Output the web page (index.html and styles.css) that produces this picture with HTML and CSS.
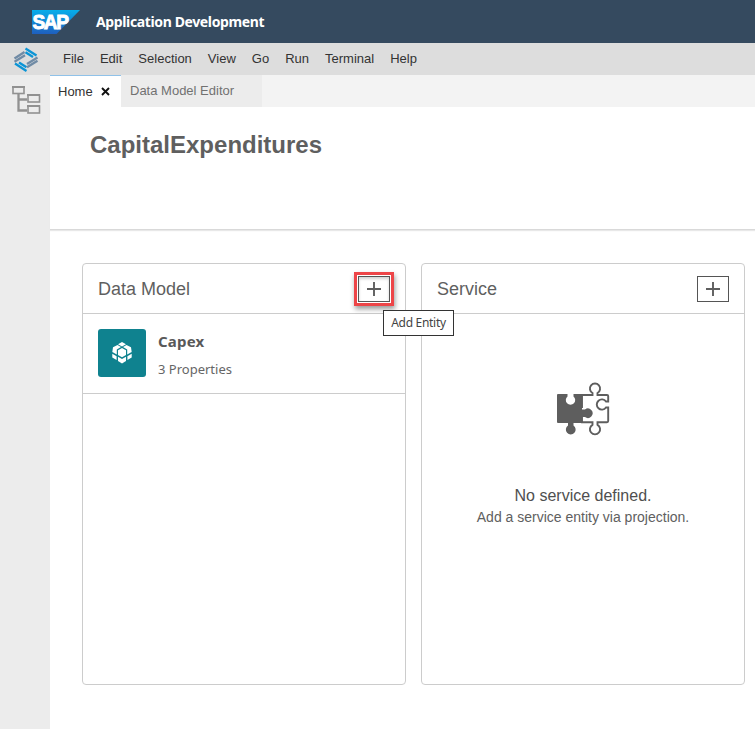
FILE: index.html
```html
<!DOCTYPE html>
<html lang="en">
<head>
<meta charset="utf-8">
<title>Application Development</title>
<link rel="stylesheet" href="styles.css">
</head>
<body>
<header class="shell">
  <svg class="sap" width="48" height="24" viewBox="0 0 48 24" role="img">
    <defs><linearGradient id="blue" x1="0" y1="0" x2="0" y2="1"><stop offset="0" stop-color="#06aeea"/><stop offset="1" stop-color="#1f5fbe"/></linearGradient></defs>
    <path d="M0 0H48L24.500 24H0Z" fill="url(#blue)"/>
    <text class="sap-text" x="0.500" y="18.700" textLength="35" lengthAdjust="spacingAndGlyphs">SAP</text>
  </svg>
  <span class="shell-title">Application Development</span>
</header>
<nav class="menu">
  <svg class="product" width="26" height="26" viewBox="0 0 26 26" fill="none" stroke-width="2.300">
    <g stroke="#0a94d6"><path d="M12.500 1.500L23.500 8.500"/><path d="M12.500 5.200L20 10"/><path d="M2 16.500L13.500 24"/><path d="M6 15.500L13.500 20.300"/></g>
    <g stroke="#708ba5"><path d="M11.500 5L1.500 11.500"/><path d="M12 8.300L1.500 14.800"/><path d="M14 17L24.500 10.500"/><path d="M14 20.300L24.500 13.800"/></g>
  </svg>
  <span>File</span><span>Edit</span><span>Selection</span><span>View</span><span>Go</span><span>Run</span><span>Terminal</span><span>Help</span>
</nav>
<div class="workspace">
  <aside class="sidebar">
    <svg width="30" height="30" viewBox="0 0 30 30" fill="none" stroke="#919191" stroke-width="1.600">
      <path d="M6.500 8V25.500H15M6.500 14.500H15" stroke-width="2.300"/>
      <rect x="1" y="2" width="11" height="6.500"/><rect x="16" y="10" width="11.500" height="7"/><rect x="16" y="21" width="11.500" height="7"/>
      <path d="M0 2H13M15 10H28M15 21H28" stroke-width="2"/>
    </svg>
  </aside>
  <main class="main">
    <div class="tabs">
      <div class="tab active">Home<svg width="9" height="9" viewBox="0 0 9 9"><path d="M1 1L8 8M8 1L1 8" stroke="#111" stroke-width="1.900"/></svg></div>
      <div class="tab">Data Model Editor</div>
    </div>
    <div class="project"><h1>CapitalExpenditures</h1></div>
    <div class="cards">
      <section class="card">
        <div class="card-head">
          <h2>Data Model</h2>
          <div class="add highlighted">
            <svg width="14" height="14" viewBox="0 0 14 14"><path d="M7 0V14M0 7H14" stroke="#5e5e5e" stroke-width="1.900"/></svg>
            <div class="tooltip">Add Entity</div>
          </div>
        </div>
        <div class="entity">
          <div class="entity-icon">
            <svg width="22" height="24" viewBox="0 0 22 24" fill="#fff">
              <path d="M11 1L15 3.300L11 5.600L7 3.300ZM2 6.300L6.500 4L10 6L5.800 8.500V13.500L1.300 11ZM20 6.300L15.500 4L12 6L16.200 8.500V13.500L20.700 11ZM1.300 12.800L5.600 15.200V19L1.300 16.500ZM20.700 12.800L16.400 15.200V19L20.700 16.500ZM7 15.800L11 18L15 15.800V20L11 22.500L7 20Z"/>
              <path d="M11 7L15 9.300V14L11 16.300L7 14V9.300Z"/>
            </svg>
          </div>
          <div><div class="entity-name">Capex</div><div class="entity-info">3 Properties</div></div>
        </div>
      </section>
      <section class="card">
        <div class="card-head">
          <h2>Service</h2>
          <div class="add"><svg width="14" height="14" viewBox="0 0 14 14"><path d="M7 0V14M0 7H14" stroke="#5e5e5e" stroke-width="1.900"/></svg></div>
        </div>
        <div class="empty">
          <svg width="56" height="56" viewBox="0 0 56 56">
            <path fill="#5e5e5e" d="M3 13H12.500V15.500A4.700 4.700 0 1 0 18.500 15.500V13H27V28.500H30A4.700 4.700 0 1 1 30 36H27V42H18.500V44.500A4.900 4.900 0 1 1 13 44.500V42H3Q2 42 2 41V14Q2 13 3 13Z"/>
            <path fill="none" stroke="#5e5e5e" stroke-width="1.900" d="M27 27V14H37.500V12A5.100 5.100 0 1 1 42.500 12V14H52Q53.200 14 53.200 15.200V20.500H51A5.100 5.100 0 1 0 51 26.500H53.200V40Q53.200 41.200 52 41.200H42.500V43.800A5.100 5.100 0 1 1 37.500 43.800V41.200H27V36"/>
          </svg>
          <div class="empty-title">No service defined.</div>
          <div class="empty-text">Add a service entity via projection.</div>
        </div>
      </section>
    </div>
  </main>
</div>
</body>
</html>
```

FILE: styles.css
```css
* { box-sizing: border-box; }
body { margin: 0; height: 729px; overflow: hidden; background: #fff; font-family: "Liberation Sans", Arial, sans-serif; display: flex; flex-direction: column; }
svg { display: block; flex: none; }
.shell { height: 43px; flex: none; background: #354a5f; padding-left: 32px; display: flex; align-items: center; gap: 16px; }
.sap-text { font: bold 20px "Liberation Sans", sans-serif; letter-spacing: -1.5px; fill: #fff; stroke: #fff; stroke-width: .9px; }
.shell-title { color: #fff; font: bold 14px/20px "Noto Sans", sans-serif; letter-spacing: -.37px; padding-top: 1px; }
.menu { height: 32px; flex: none; background: #ddd; padding: 0 0 2px 13px; display: flex; align-items: center; gap: 16px; color: #333; font-size: 13px; }
.product { margin: 3px 8px 0 0; }
.workspace { flex: 1; display: flex; min-height: 0; }
.sidebar { width: 50px; background: #ececec; padding: 10px 0 0 12px; }
.main { flex: 1; display: flex; flex-direction: column; }
.tabs { height: 32px; background: #f3f3f3; display: flex; font-size: 13px; }
.tab { width: 141px; height: 32px; padding-left: 9px; background: #ececec; color: #717171; line-height: 31px; }
.tab.active { width: 71px; padding-left: 8px; display: flex; align-items: center; gap: 8px; background: #fff; border-top: 1px solid #90c2e9; color: #333; }
.project { height: 123px; margin-bottom: 1px; padding: 24px 40px; border-bottom: 1px solid #d9d9d9; box-shadow: 0 1px 1px #e8e8e8; }
h1 { margin: 0; color: #5f5f5f; font-size: 24px; line-height: 28px; }
.cards { display: grid; grid-template-columns: 324px 324px; gap: 15px; padding: 32px 0 0 32px; }
.card { height: 422px; border: 1px solid #ccc; border-radius: 4px; }
.card-head { height: 50px; padding: 0 15px; border-bottom: 1px solid #ccc; display: flex; align-items: center; justify-content: space-between; }
h2 { margin: 0; padding-top: 2px; color: #5f5f5f; font-size: 18px; font-weight: normal; }
.add { position: relative; width: 32px; height: 26px; border: 1px solid #555; display: flex; align-items: center; justify-content: center; }
.highlighted { outline: 3px solid #ed4548; outline-offset: 1px; box-shadow: 0 0 0 1px #fff, 1px 3px 5px 4px rgba(0, 0, 0, .4), inset 0 2px 3px rgba(0, 0, 0, .18); }
.tooltip { position: absolute; left: 24px; top: 33px; z-index: 1; width: 71px; height: 26px; border: 1px solid #333; background: #fff; color: #444; font: 12px/24px "Noto Sans", sans-serif; letter-spacing: -.3px; text-align: center; white-space: nowrap; }
.entity { height: 80px; padding: 15px; border-bottom: 1px solid #ccc; display: flex; gap: 12px; }
.entity-icon { width: 48px; height: 48px; border-radius: 3px; background: #0f828f; display: flex; align-items: center; justify-content: center; }
.entity-name { color: #595959; font: bold 15px/24px "Noto Sans", sans-serif; letter-spacing: .2px; }
.entity-info { padding-top: 2px; color: #666; font: 13px/28px "Noto Sans", sans-serif; }
.empty { padding-top: 67px; display: flex; flex-direction: column; align-items: center; }
.empty-title { margin-top: 49px; color: #4f4f4f; font-size: 16px; line-height: 20px; }
.empty-text { margin-top: 2px; color: #606060; font-size: 14px; line-height: 18px; }
```
